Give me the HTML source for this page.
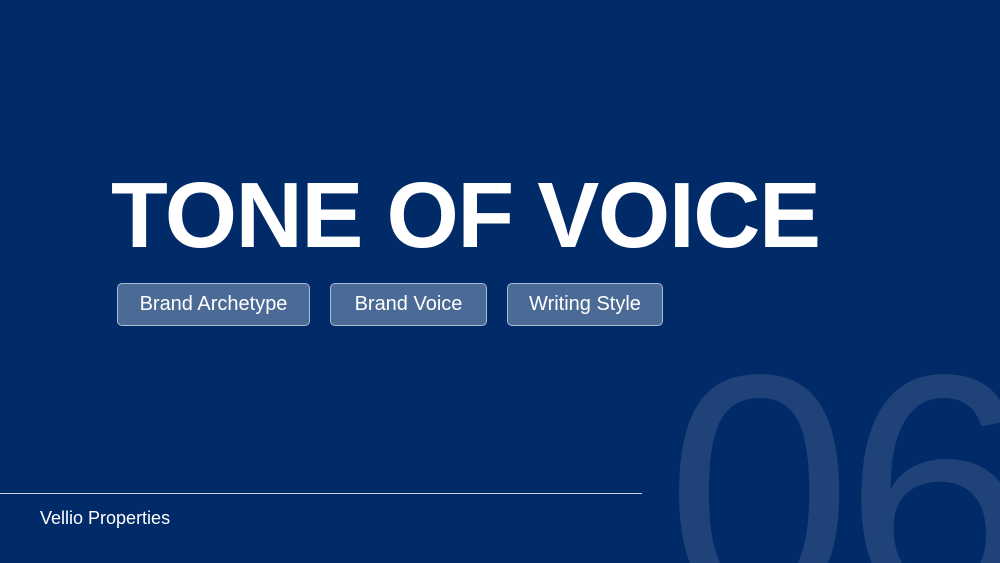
<!DOCTYPE html>
<html><head><style>
html,body{margin:0;width:1000px;height:563px;overflow:hidden}
body{background:#002a68;position:relative;font-family:"Liberation Sans",sans-serif;color:#fff}
.t{position:absolute;left:111px;top:165px;font-size:93px;font-weight:bold;letter-spacing:-1.4px;line-height:100px;white-space:nowrap}
.b{position:absolute;top:283px;height:43px;border:1.5px solid #a9bbd6;border-radius:5px;background:#4b6a95;box-sizing:border-box;font-size:20px;line-height:41px;text-align:center;white-space:nowrap}
.clip{position:absolute;left:640px;top:300px;width:360px;height:263px;overflow:hidden}
.n{position:absolute;left:26px;top:25px;font-size:335px;line-height:335px;color:#1f4379;letter-spacing:-8px;white-space:nowrap}
.l{position:absolute;left:0;top:493px;width:642px;height:1px;background:#c9d3e3}
.f{position:absolute;left:40px;top:508px;font-size:18px}
</style></head><body>
<div class="clip"><div class="n">06</div></div>
<div class="t">TONE OF VOICE</div>
<div class="b" style="left:117px;width:193px">Brand Archetype</div>
<div class="b" style="left:330px;width:157px">Brand Voice</div>
<div class="b" style="left:507px;width:156px">Writing Style</div>
<div class="l"></div>
<div class="f">Vellio Properties</div>
</body></html>
